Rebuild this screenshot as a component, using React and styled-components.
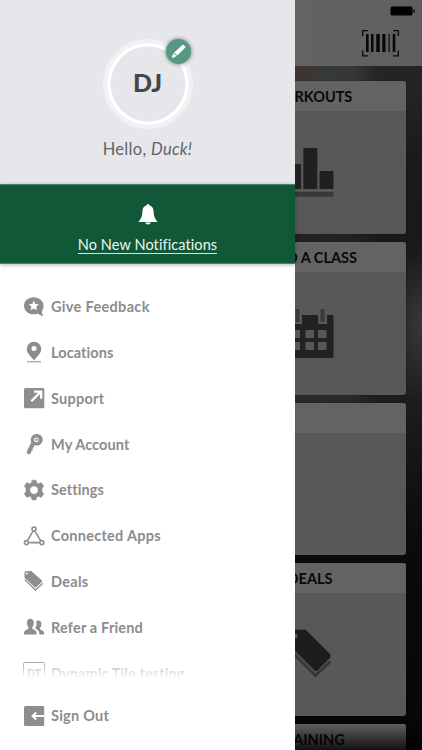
import React from 'react'
import styled, { createGlobalStyle } from 'styled-components'

const menuItems = [
  { label: 'Give Feedback', icon: 'feedback', spacing: 0.33 },
  { label: 'Locations', icon: 'pin', spacing: 0.07 },
  { label: 'Support', icon: 'support', spacing: 0.25 },
  { label: 'My Account', icon: 'key', spacing: 0.1 },
  { label: 'Settings', icon: 'gear', spacing: 0.1 },
  { label: 'Connected Apps', icon: 'apps', spacing: 0.27 },
  { label: 'Deals', icon: 'tag', spacing: 0.3 },
  { label: 'Refer a Friend', icon: 'friends', spacing: 0.17 },
  { label: 'Dynamic Tile testing', icon: 'tile', spacing: 0.1 },
]

const tiles = [
  { title: 'WORKOUTS', art: 'chart' },
  { title: 'FIND A CLASS', art: 'calendar' },
  { title: '', art: null },
  { title: 'DEALS', art: 'tag' },
  { title: 'TRAINING', art: null },
]

const icons = {
  feedback: (
    <>
      <path d='M10.7 1.2C5.2 1.2 1 4.8 1 9.7s4.2 8.6 9.7 8.6c1.7 0 3.2-.3 4.5-.9 1.3 1.5 3 2.4 5.2 2.5-.9-1.2-1.5-2.6-1.6-4.2 1-1.6 1.7-3.5 1.7-6C20.5 4.8 16.2 1.2 10.7 1.2z' />
      <path
        fill='#fff'
        d='M10.8 4.6l1.5 3.3 3.6.4-2.7 2.4.8 3.6-3.2-1.8-3.2 1.8.8-3.6-2.7-2.4 3.6-.4z'
      />
    </>
  ),
  pin: (
    <>
      <path
        fillRule='evenodd'
        d='M11 .7a7.2 7.2 0 0 0-7.2 7.2c0 4.6 4.2 7.2 7.2 11.6 3-4.4 7.2-7 7.2-11.6A7.2 7.2 0 0 0 11 .7zm0 4.4a2.5 2.5 0 1 1 0 5 2.5 2.5 0 0 1 0-5z'
      />
      <path d='M4 20.3h14v1H4z' />
    </>
  ),
  support: (
    <>
      <rect x='1' y='1' width='20.3' height='20.3' rx='1.5' />
      <path
        fill='none'
        stroke='#fff'
        strokeWidth='2.3'
        d='M8.3 14.2l9-9M11 4.6h7.2v7.2'
      />
    </>
  ),
  key: (
    <>
      <path
        fillRule='evenodd'
        d='M13.5 1A5.8 5.8 0 0 0 8.3 9.2L3.8 18.4l.2 2.2 2.2.6 1.9-1.2-.1-1.7 1.4-.4.1-1.8 2.3-4.2A5.7 5.7 0 1 0 13.5 1zm-.2 3.4a2.4 2.4 0 1 1 0 4.8 2.4 2.4 0 0 1 0-4.8z'
      />
      <circle cx='13.4' cy='6.8' r='1.2' />
    </>
  ),
  gear: (
    <path
      fillRule='evenodd'
      stroke='#8d8e90'
      strokeWidth='.5'
      strokeLinejoin='round'
      d='M8.9 1.2h4.2l.5 2.6 1.7 1 2.8-1.2 2.6 3.4-1.7 2.4v3.2l1.7 2.4-2.6 3.4-2.8-1.2-1.7 1-.5 2.7H8.9l-.5-2.7-1.7-1-2.8 1.2L1.3 15 3 12.6V9.4L1.3 7l2.6-3.4 2.8 1.2 1.7-1zM11 6.9a4.2 4.2 0 1 0 0 8.4 4.2 4.2 0 0 0 0-8.4z'
    />
  ),
  apps: (
    <g fill='none' stroke='#8d8e90' strokeWidth='1.6'>
      <circle cx='11' cy='4.1' r='2' />
      <circle cx='3.4' cy='17.6' r='2' />
      <circle cx='18.8' cy='17.6' r='2' />
      <path d='M9.9 6.3l-5.3 9.1M12.1 6.3l5.4 9.1M6.2 17.6h10' />
    </g>
  ),
  tag: (
    <>
      <path
        fillRule='evenodd'
        d='M1.5 2.3l.8-1 6-.2L19 10.4v1.3l-5.9 5.6h-1.2L1.5 7.7zM3.7 2.4a1 1 0 1 0 0 2 1 1 0 0 0 0-2z'
      />
      <path
        fill='none'
        stroke='#8d8e90'
        strokeWidth='1.3'
        d='M1.7 9.6L12.5 20l7.3-6.7'
      />
    </>
  ),
  friends: (
    <>
      <path d='M14.3 18.6h6.9c0-3-.6-3.800-2.500-4.600-1.500-.6-2-1-1.700-2.100 1-1 1.300-2.100 1.400-3.600.1-2.500-1-3.900-3.100-3.900-1 0-1.800.3-2.300.9.6 1.400.7 2.800.3 4.500-.2 1-.7 1.800-1.100 2.300.5 1.200 2.200 1.800 3.100 2.600.8.8 1.100 1.900 1.100 3.900z' />
      <path d='M1 18.600h12.600c0-3-.3-4-2.500-4.900-1.700-.6-2.200-1.200-1.800-2.500 1-1 1.500-2.300 1.500-4.100 0-2.700-1.200-4.400-3.400-4.400S3.900 4.400 3.900 7.100c0 1.800.5 3.100 1.500 4.100.4 1.300-.2 1.900-1.800 2.500C1.300 14.600 1 15.600 1 18.600z' />
    </>
  ),
  signout: (
    <>
      <rect x='1' y='.9' width='20.2' height='20.2' rx='1.5' />
      <path
        fill='none'
        stroke='#fff'
        strokeWidth='2'
        d='M21.3 11H9.7M13.200 7.500L9.600 11l3.600 3.500'
      />
    </>
  ),
}

const art = {
  chart: (
    <>
      <path
        fill='#202020'
        d='M0 17h15v25H0zM17.3 1h14v41h-14zM33.5 24h14v18h-14z'
      />
      <path fill='#383838' d='M0 44.700h47.5v5H0z' />
    </>
  ),
  calendar: (
    <>
      <path
        fillRule='evenodd'
        fill='#222'
        d='M0 7h6v9h10V7h16v9h9V7h6.500v43H0zM5 22v8h9v-8zm14.500 0v8h8.500v-8zm12.500 0v8h8.500v-8zM5 34v8h9v-8zm14.500 0v8h8.500v-8zm12.500 0v8h8.500v-8z'
      />
      <path fill='#3a3a3a' d='M9.500 1h4v13h-4zM34.500 1h4v13h-4z' />
    </>
  ),
  tag: (
    <>
      <path
        fillRule='evenodd'
        fill='#1d1d1d'
        d='M2 4l2-3 15.500-.4L44.500 25.500v3L31 42h-2L2 15zM9.500 5a2.200 2.200 0 1 0 0 4.400 2.200 2.200 0 0 0 0-4.400z'
      />
      <path
        fill='none'
        stroke='#363636'
        strokeWidth='2.8'
        d='M2.500 19.500L29.500 46.500l15-14'
      />
    </>
  ),
}

const MenuIcon = ({ name }) => {
  if (name === 'tile') {
    return <TileBadge>DT</TileBadge>
  }
  return <IconSvg viewBox='0 0 22 22'>{icons[name]}</IconSvg>
}

const App = () => {
  return (
    <Screen>
      <GlobalStyle />
      <Header>
        <Battery viewBox='0 0 26 10'>
          <rect x='.5' y='.5' width='22' height='9' rx='1.5' />
          <path d='M23.5 3.3h1.2v3.4h-1.2z' />
        </Battery>
        <Barcode viewBox='0 0 37 27'>
          <path
            fill='none'
            stroke='#080808'
            strokeWidth='1.3'
            d='M.7 6V.7H6M31 .7h5.3V6M36.3 20.5v5.3H31M6 25.800H.7v-5.300'
          />
          <path d='M4 4h2.600v18H4zM9 4h2.500v18H9zM14.300 4h3.500v18h-3.500zM20.300 4h3.200v18h-3.200zM26.500 4h1.200v18h-1.200zM30.700 4h2.600v18h-2.600z' />
        </Barcode>
      </Header>
      <TileList>
        {tiles.map((tile, index) => (
          <Tile key={index}>
            <TileTitle>{tile.title}</TileTitle>
            <TileBody>
              {tile.art && <ArtSvg viewBox='0 0 48 50'>{art[tile.art]}</ArtSvg>}
            </TileBody>
          </Tile>
        ))}
      </TileList>
      <BottomShade />
      <Drawer>
        <Profile>
          <Avatar>
            <Initials>DJ</Initials>
            <EditButton type='button' aria-label='Edit photo'>
              <svg width='15' height='15' viewBox='0 0 15 15' fill='#fff'>
                <path d='M9.300 3L11.300.9q.7-.6 1.400.1l1.400 1.400q.6.7 0 1.400L6.300 11.400 3.100 8.400z' />
                <path d='M2.500 9.100l3.100 3-3.900 2-.9-.9z' />
              </svg>
            </EditButton>
          </Avatar>
          <Greeting>
            Hello, <em>Duck!</em>
          </Greeting>
        </Profile>
        <Notifications>
          <svg width='20' height='21' viewBox='0 0 20 21' fill='#fff'>
            <path d='M10 .3c-.9 0-1.500.5-1.600 1.200C5.800 2.200 4.500 4.300 4.400 7.200c-.1 4.300-.8 6.800-4 10.700h19.200c-3.200-3.900-3.900-6.400-4-10.700-.1-2.900-1.400-5-4-5.700C11.500.8 10.900.3 10 .3z' />
            <path d='M7.200 18.600h5.600c-.4 1.300-1.300 2-2.800 2s-2.400-.7-2.800-2z' />
          </svg>
          <NotificationLink>No New Notifications</NotificationLink>
        </Notifications>
        <MenuArea>
          {menuItems.map((item) => (
            <MenuItem key={item.label}>
              <MenuIcon name={item.icon} />
              <MenuLabel $spacing={item.spacing}>{item.label}</MenuLabel>
            </MenuItem>
          ))}
          <MenuFade />
        </MenuArea>
        <SignOut>
          <MenuIcon name='signout' />
          <MenuLabel $spacing={0.25}>Sign Out</MenuLabel>
        </SignOut>
      </Drawer>
    </Screen>
  )
}

export default App

const GlobalStyle = createGlobalStyle`
  * {
    box-sizing: border-box;
  }

  body {
    margin: 0;
    overflow: hidden;
    font-family: Lato, 'Liberation Sans', sans-serif;
  }
`

const Screen = styled.div`
  position: relative;
  width: 422px;
  height: 750px;
  overflow: hidden;
  background: radial-gradient(
      ellipse 38px 75px at 422px 325px,
      rgba(66, 68, 72, 0.7),
      transparent
    ),
    linear-gradient(
      180deg,
      transparent 90px,
      rgba(20, 18, 17, 0.5) 150px,
      rgba(20, 18, 17, 0.6) 220px,
      rgba(18, 17, 16, 0.3) 390px,
      #0c0b0a 540px,
      #060606 750px
    ),
    linear-gradient(
      90deg,
      #40342c 295px,
      #363a3b 325px,
      #363737 352px,
      #272524 378px,
      #252423 422px
    );
`

const Header = styled.header`
  display: flex;
  flex-direction: column;
  align-items: flex-end;
  height: 65.5px;
  padding-top: 5px;
  background: linear-gradient(90deg, #636363 295px, #5f5f5f 422px);
`

const Battery = styled.svg`
  width: 26px;
  height: 10px;
  margin: 1px 6px 0 0;
`

const Barcode = styled.svg`
  width: 37px;
  height: 27px;
  margin: 14px 23px 0 0;
  fill: #080808;
`

const TileList = styled.main`
  display: flex;
  flex-direction: column;
  align-items: flex-end;
  gap: 8px;
  padding: 15.5px 16px 0 0;
`

const Tile = styled.section`
  flex: none;
  width: 192px;
  height: 152.8px;
  border-radius: 3px;
  overflow: hidden;
  background: #595858;
  box-shadow: 0 0 2px rgba(0, 0, 0, 0.35);
`

const TileTitle = styled.h2`
  height: 30px;
  margin: 0;
  background: #636363;
  color: #090909;
  font-size: 14.5px;
  font-weight: 700;
  line-height: 32px;
  text-align: center;
  white-space: nowrap;
`

const TileBody = styled.div`
  display: flex;
  justify-content: center;
  padding-top: 36px;
`

const ArtSvg = styled.svg`
  width: 48px;
  height: 50px;
`

const BottomShade = styled.div`
  position: absolute;
  inset: auto 0 0 0;
  height: 27px;
  background: linear-gradient(180deg, transparent, rgba(0, 0, 0, 0.82));
`

const Drawer = styled.aside`
  position: absolute;
  top: 0;
  left: 0;
  display: flex;
  flex-direction: column;
  width: 295px;
  height: 750px;
  background: #fff;
`

const Profile = styled.div`
  display: flex;
  flex-direction: column;
  align-items: center;
  height: 184px;
  padding-top: 38.5px;
  background: #e6e7eb;
`

const Avatar = styled.div`
  position: relative;
  display: flex;
  align-items: center;
  justify-content: center;
  width: 90px;
  height: 90px;
  border: 4px solid #f0f1f3;
  border-radius: 50%;
  box-shadow: inset 0 0 0 3.5px #fff;
`

const Initials = styled.span`
  padding-bottom: 4px;
  color: #454548;
  font-size: 25px;
  font-weight: 900;
`

const EditButton = styled.button`
  position: absolute;
  top: -3.5px;
  right: -2.5px;
  display: flex;
  align-items: center;
  justify-content: center;
  width: 25px;
  height: 25px;
  padding: 0;
  border: none;
  border-radius: 50%;
  background: #579882;
  box-shadow: 0 0 4px rgba(0, 0, 0, 0.5);
`

const Greeting = styled.p`
  margin: 10px 0 0;
  color: #626367;
  font-size: 16.5px;
  line-height: 20px;
  letter-spacing: 0.3px;
`

const Notifications = styled.div`
  position: relative;
  display: flex;
  flex-direction: column;
  align-items: center;
  height: 79.5px;
  padding-top: 18.7px;
  background: #105838;
  border-top: 1px solid #4b8068;
  border-bottom: 1px solid #4b8068;
  box-shadow: 0 1px 4px rgba(0, 0, 0, 0.3);
`

const NotificationLink = styled.a`
  margin-top: 12px;
  border-bottom: 1px solid #d5e3dc;
  color: #eef5f1;
  font-size: 14.5px;
  line-height: 16px;
  letter-spacing: 0.1px;
`

const MenuArea = styled.nav`
  position: relative;
  height: 416.5px;
  padding-top: 20.3px;
  overflow: hidden;
`

const MenuItem = styled.div`
  display: flex;
  align-items: center;
  gap: 6px;
  height: 45.8px;
  padding-left: 23px;
`

const MenuLabel = styled.span`
  padding-top: 1px;
  color: #8b8c8e;
  font-size: 14.5px;
  font-weight: 700;
  line-height: 20px;
  letter-spacing: ${({ $spacing }) => $spacing}px;
  white-space: nowrap;
`

const IconSvg = styled.svg`
  flex: none;
  width: 22px;
  height: 22px;
  fill: #8d8e90;
`

const TileBadge = styled.span`
  display: flex;
  align-items: center;
  justify-content: center;
  width: 22px;
  height: 22px;
  border: 1px solid #77787a;
  border-radius: 1.5px;
  color: #88898b;
  font-size: 10.5px;
  font-weight: 900;
`

const MenuFade = styled.div`
  position: absolute;
  inset: auto 0 0 0;
  height: 27px;
  background: linear-gradient(180deg, rgba(255, 255, 255, 0), #fff 94%);
`

const SignOut = styled(MenuItem)`
  margin-top: 13px;
`
